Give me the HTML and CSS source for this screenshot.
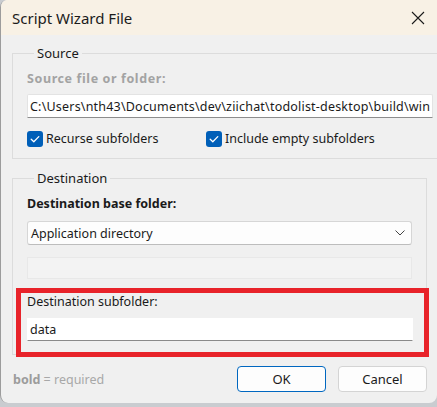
FILE: index.html
```html
<!DOCTYPE html>
<html>
<head>
<meta charset="utf-8">
<link rel="stylesheet" href="styles.css">
</head>
<body>
<div class="window">
  <div class="titlebar">
    <span class="title">Script Wizard File</span>
    <svg class="close" width="14" height="14" viewBox="0 0 14 14"><path d="M1 1 L13 13 M13 1 L1 13" stroke="#1b1b1b" stroke-width="1.1" fill="none"/></svg>
  </div>
  <div class="content">
    <fieldset class="group source">
      <legend>Source</legend>
      <div class="label bold disabled">Source file or folder:</div>
      <div class="input path"><span>C:\Users\nth43\Documents\dev\ziichat\todolist-desktop\build\win</span></div>
      <div class="checks">
        <label class="check first"><span class="box"><svg width="16" height="16" viewBox="0 0 16 16"><path d="M4.2 8.2 L6.8 10.7 L11.8 5.6" stroke="#fff" stroke-width="1.3" fill="none" stroke-linecap="round" stroke-linejoin="round"/></svg></span>Recurse subfolders</label>
        <label class="check"><span class="box"><svg width="16" height="16" viewBox="0 0 16 16"><path d="M4.2 8.2 L6.8 10.7 L11.8 5.6" stroke="#fff" stroke-width="1.3" fill="none" stroke-linecap="round" stroke-linejoin="round"/></svg></span>Include empty subfolders</label>
      </div>
    </fieldset>
    <fieldset class="group dest">
      <legend>Destination</legend>
      <div class="label bold">Destination base folder:</div>
      <div class="combo"><span>Application directory</span><svg width="10" height="6" viewBox="0 0 10 6"><path d="M0.5 0.5 L5 5 L9.5 0.5" stroke="#444" stroke-width="1" fill="none"/></svg></div>
      <div class="input empty"></div>
      <div class="highlight">
        <div class="label">Destination subfolder:</div>
        <div class="input data"><span>data</span></div>
      </div>
    </fieldset>
    <div class="footer">
      <div class="hint"><b>bold</b> = required</div>
      <div class="buttons">
        <button class="btn primary">OK</button>
        <button class="btn">Cancel</button>
      </div>
    </div>
  </div>
</div>
</body>
</html>
```
FILE: styles.css
```css
html, body {
  margin: 0;
  padding: 0;
}
body {
  width: 437px;
  height: 407px;
  background: #c9ccd0;
  font-family: "Noto Sans", "Open Sans", sans-serif;
  font-size: 12.5px;
  color: #1a1a1a;
  overflow: hidden;
}
.window {
  height: 403px;
  background: #f0f0f0;
  border-left: 1px solid #9c9c9c;
  border-radius: 7px 0 8px 8px;
  box-sizing: border-box;
  overflow: hidden;
}
.titlebar {
  height: 35px;
  background: #f8f1e5;
  display: flex;
  align-items: center;
  justify-content: space-between;
  padding: 0 12px 0 11px;
}
.title {
  font-size: 15px;
  color: #1b1b1b;
}
.close {
  display: block;
}
.content {
  padding: 10px 10px 0 11px;
}
.group {
  margin: 0;
  border: 1px solid #dcdcdc;
  padding: 10px 14px 11px 14px;
}
.group legend {
  padding: 0 3px;
  margin-left: 7px;
  font-size: 13px;
  line-height: 16px;
  color: #1a1a1a;
}
.label {
  line-height: 16px;
}
.bold {
  font-weight: bold;
}
.disabled {
  color: #a3a3a3;
  letter-spacing: 0.6px;
}
.input {
  box-sizing: border-box;
  background: #fff;
  border: 1px solid #e3e3e3;
  border-bottom-color: #8c8c8c;
  height: 24px;
  display: flex;
  align-items: center;
  padding: 0 2px;
  white-space: nowrap;
  overflow: hidden;
}
.path {
  margin-top: 7px;
  border-radius: 2px 2px 0 0;
  letter-spacing: 0.2px;
}
.checks {
  display: flex;
  margin-top: 13px;
}
.check {
  display: flex;
  align-items: center;
  line-height: 16px;
}
.check.first {
  width: 179px;
}
.box {
  width: 16px;
  height: 16px;
  border-radius: 3px;
  background: #005fb8;
  margin-right: 3px;
}
.box svg {
  display: block;
}
.dest {
  margin-top: 11px;
  padding-bottom: 0;
}
.combo {
  box-sizing: border-box;
  margin-top: 9px;
  height: 24px;
  background: #fdfdfd;
  border: 1px solid #d6d6d6;
  border-bottom-color: #bdbdbd;
  border-radius: 3px;
  display: flex;
  align-items: center;
  justify-content: space-between;
  padding: 0 6px 0 3px;
}
.combo svg {
  display: block;
}
.empty {
  margin-top: 12px;
  height: 22px;
  background: #f3f3f3;
  border: 1px solid #e8e8e8;
}
.highlight {
  margin: 9px -17px -3px -11px;
  border: 5px solid #e8232a;
  padding: 1px 11px 11px 6px;
}
.data {
  margin-top: 8px;
  height: 23px;
  border-color: #ffffff;
  border-bottom-color: #8a8a8a;
  padding-left: 2px;
}
.footer {
  display: flex;
  justify-content: space-between;
  align-items: center;
  margin-top: 11px;
}
.hint {
  color: #a8a8a8;
  padding-left: 1px;
}
.hint b {
  color: #9c9c9c;
}
.buttons {
  display: flex;
  gap: 12px;
}
.btn {
  width: 89px;
  height: 26px;
  box-sizing: border-box;
  background: #fdfdfd;
  border: 1px solid #d4d4d4;
  border-radius: 4px;
  font-family: inherit;
  font-size: 13px;
  color: #1a1a1a;
  padding: 0;
}
.primary {
  border-color: #0067c0;
}
```
